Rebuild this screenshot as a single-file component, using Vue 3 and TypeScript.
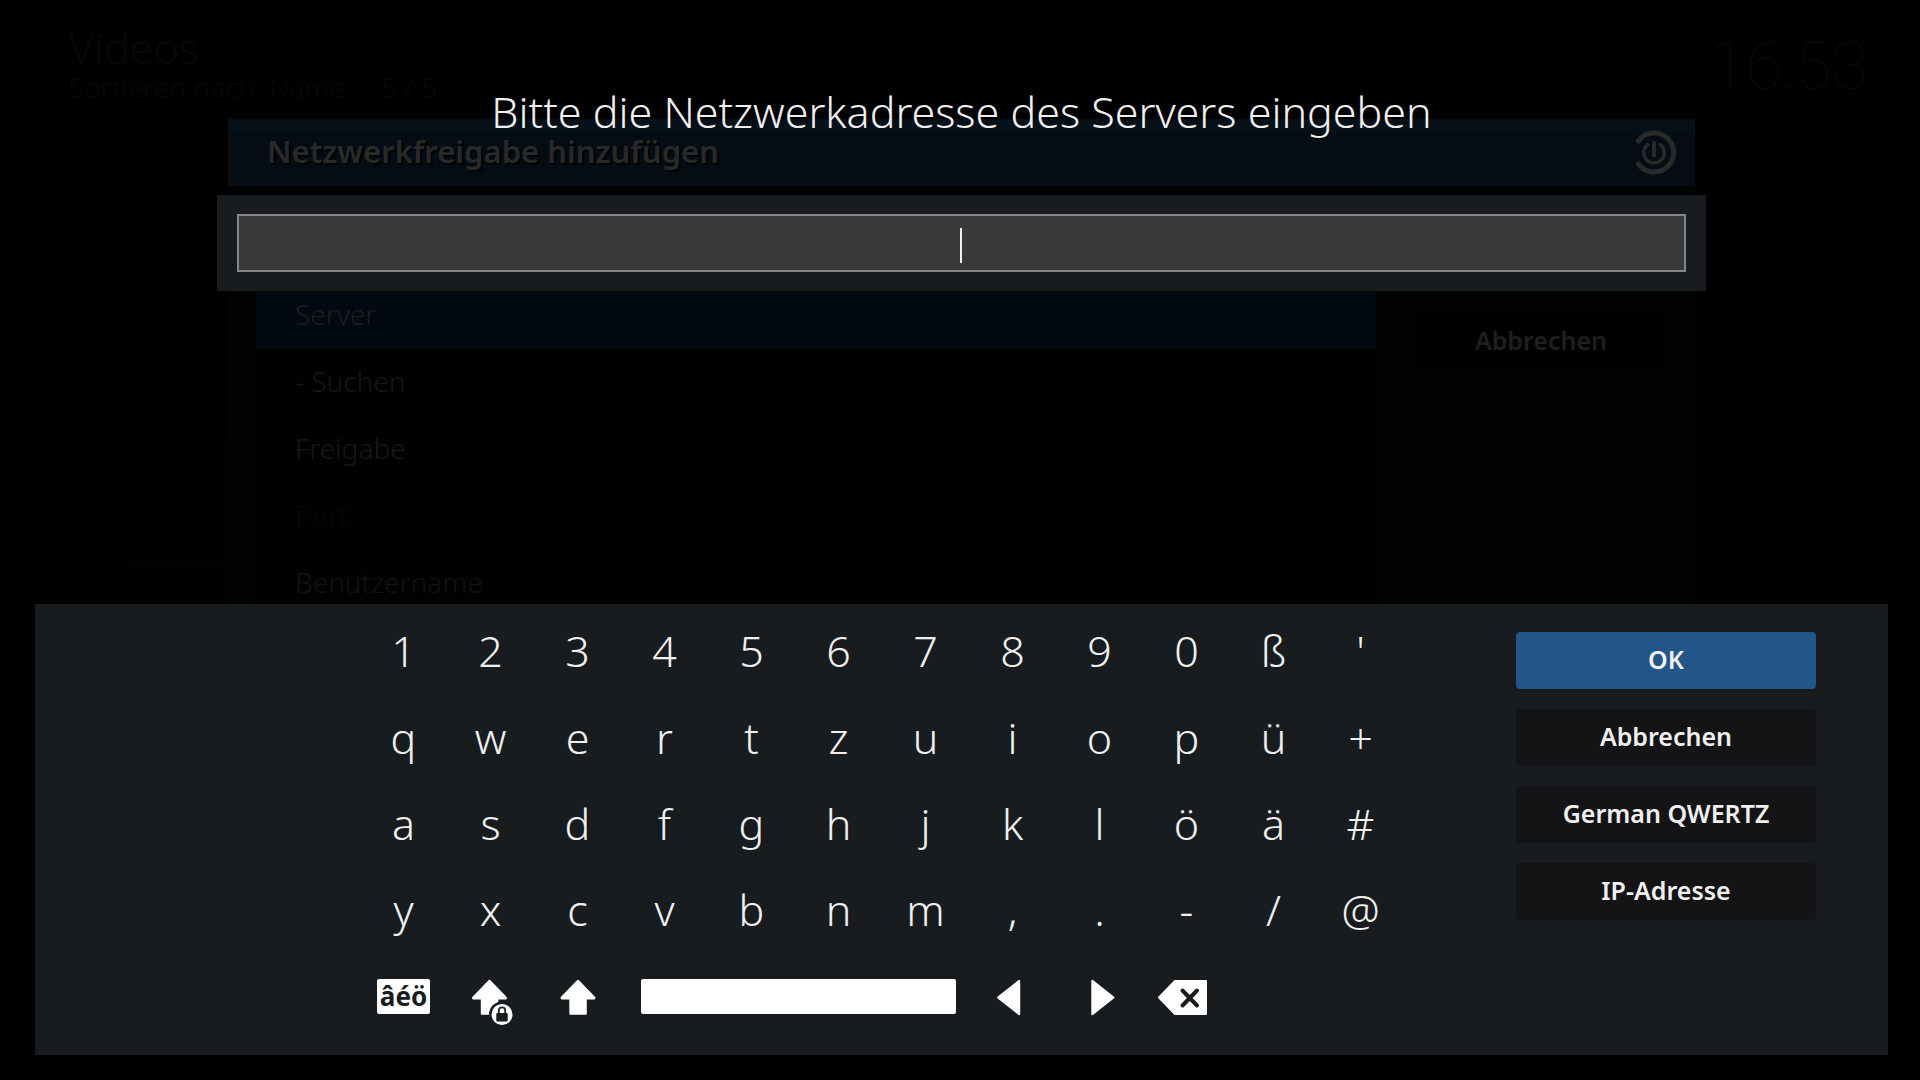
<script setup lang="ts">
import { ref } from 'vue'

interface Row {
  label: string
  tone: string
}

const address = ref('')

const keys: string[] = [
  ...'1234567890ß\'',
  ...'qwertzuiopü+',
  ...'asdfghjklöä#',
  ...'yxcvbnm,.-/@',
]

const rows: Row[] = [
  { label: 'Server', tone: 'selected' },
  { label: '- Suchen', tone: 'normal' },
  { label: 'Freigabe', tone: 'normal' },
  { label: 'Port', tone: 'disabled' },
  { label: 'Benutzername', tone: 'faded' },
]

const actions: string[] = ['OK', 'Abbrechen', 'German QWERTZ', 'IP-Adresse']
</script>

<template>
  <div class="screen">
    <div class="window">
      <header class="topbar">
        <div>
          <div class="section">Videos</div>
          <div class="sorting">Sortieren nach: Name &nbsp;·&nbsp; 5 / 5</div>
        </div>
        <time class="clock">16:53</time>
      </header>
      <div class="tile"></div>
    </div>

    <section class="share">
      <header class="share-head">
        <h2>Netzwerkfreigabe hinzufügen</h2>
        <button class="power" type="button" aria-label="Schließen">
          <svg viewBox="0 0 48 48" width="48" height="48" fill="none" stroke="#292929" stroke-linecap="round">
            <path d="M8.500 12A19.500 19.500 0 1 1 8.500 35" stroke-width="5" />
            <path d="M17.800 15.500A10.300 10.300 0 1 0 30.200 15.500" stroke-width="3.500" />
            <path d="M24 13.500V26.500" stroke-width="4" />
          </svg>
        </button>
      </header>
      <div class="share-body">
        <ul class="rows">
          <li v-for="row in rows" :key="row.label" :class="row.tone">{{ row.label }}</li>
        </ul>
        <div class="share-side">
          <button type="button">Abbrechen</button>
        </div>
      </div>
    </section>

    <main class="dialog">
      <h1><label for="address">Bitte die Netzwerkadresse des Servers eingeben</label></h1>
      <div class="edit">
        <input id="address" v-model="address" type="text" />
        <span class="caret"></span>
      </div>

      <div class="keyboard">
        <div class="keys">
          <button v-for="key in keys" :key="key" type="button">{{ key }}</button>
          <button type="button"><span class="accents">âéö</span></button>
          <button type="button" aria-label="Feststelltaste">
            <svg viewBox="0 0 60 60" width="60" height="60">
              <path class="solid" d="M28.500 13.800L45 30.700L44.600 31.600H36.300V46.800H20.800V31.600H12.400L12 30.700Z" />
              <circle cx="41" cy="47.500" r="13" fill="#181c1e" />
              <circle cx="41" cy="47.500" r="10.500" fill="#fff" />
              <rect x="35.300" y="46" width="11.400" height="8.500" rx="1" fill="#181c1e" />
              <path d="M37.800 46.500V43.500A3.200 3.200 0 0 1 44.200 43.500V46.500" fill="none" stroke="#181c1e" stroke-width="1.800" />
            </svg>
          </button>
          <button type="button" aria-label="Umschalt">
            <svg viewBox="0 0 60 60" width="60" height="60">
              <path class="solid" d="M30 13.800L46.500 30.700L46.100 31.600H37.800V46.800H22.300V31.600H13.900L13.500 30.700Z" />
            </svg>
          </button>
          <button class="space" type="button" aria-label="Leertaste"><span></span></button>
          <button type="button" aria-label="Links">
            <svg viewBox="0 0 60 60" width="60" height="60">
              <path class="solid" d="M15 30.500L36.200 13.800V47.200Z" />
            </svg>
          </button>
          <button type="button" aria-label="Rechts">
            <svg viewBox="0 0 60 60" width="60" height="60">
              <path class="solid" d="M43.500 30.500L22.300 13.800V47.200Z" />
            </svg>
          </button>
          <button type="button" aria-label="Löschen">
            <svg viewBox="0 0 60 60" width="60" height="60">
              <path class="solid" d="M2 30.500L18 14H49V47H18Z" />
              <path d="M25.500 23.500L40 38.500M40 23.500L25.500 38.500" fill="none" stroke="#181c1e" stroke-width="4" stroke-linecap="round" />
            </svg>
          </button>
        </div>
        <div class="actions">
          <button v-for="action in actions" :key="action" type="button" :class="{ primary: action === 'OK' }">
            {{ action }}
          </button>
        </div>
      </div>
    </main>
  </div>
</template>

<style>
body {
  margin: 0;
  background: #000;
}
</style>

<style scoped>
.screen {
  position: relative;
  min-height: 100vh;
  overflow: hidden;
  background: #000;
  color: #f0f0f0;
  font-family: "Noto Sans", "Open Sans", sans-serif;
  font-weight: 300;
}

button {
  margin: 0;
  padding: 0;
  border: 0;
  background: none;
  color: inherit;
  font: inherit;
}

.window {
  position: absolute;
  inset: 0;
  color: #080808;
}

.topbar {
  display: flex;
  justify-content: space-between;
  padding: 20px 52px 0 69px;
}

.section {
  font-size: 43px;
  line-height: 56px;
}

.sorting {
  font-size: 28px;
  line-height: 22px;
}

.clock {
  font-family: Roboto, sans-serif;
  font-size: 67px;
  font-weight: 100;
  line-height: 92px;
}

.tile {
  position: absolute;
  top: 445px;
  left: 124px;
  width: 184px;
  height: 150px;
  background: linear-gradient(#000102 0 80%, #000100 80%);
}

.share {
  position: absolute;
  top: 119px;
  right: 225px;
  bottom: 119px;
  left: 228px;
  display: flex;
  flex-direction: column;
  background: #010202;
}

.share-head {
  display: flex;
  align-items: center;
  justify-content: space-between;
  height: 67px;
  padding: 0 17px 0 39px;
  background: linear-gradient(#061018 0 14px, #050c13 14px);
}

.share-head h2 {
  margin: 0;
  padding-bottom: 4px;
  color: #292929;
  font-size: 31px;
  font-weight: 600;
  line-height: 44px;
  text-shadow: 2px 2px 0 #010203;
}

.power {
  display: flex;
}

.share-body {
  display: flex;
  flex: 1;
}

.rows {
  flex: 1;
  margin: 0 0 0 28px;
  padding: 96px 0 0;
  background: #010101;
  list-style: none;
  font-size: 28px;
}

.rows li {
  box-sizing: border-box;
  height: 67px;
  padding: 0 39px 2px;
  color: #181818;
  line-height: 65px;
}

.rows .selected {
  background: #030911;
  color: #1e1e1e;
}

.rows .disabled {
  color: #080808;
}

.rows .faded {
  color: #131313;
}

.share-side {
  box-sizing: border-box;
  width: 319px;
  padding: 127px 29px 0 40px;
}

.share-side button {
  width: 250px;
  height: 57px;
  padding-bottom: 4px;
  background: #010101;
  color: #1f1f1f;
  font-size: 25px;
  font-weight: 600;
}

.dialog {
  position: relative;
  box-sizing: border-box;
  display: flex;
  flex-direction: column;
  min-height: 100vh;
  padding: 82px 32px 25px 35px;
}

h1 {
  margin: 0 0 53px;
  font-size: 43px;
  font-weight: 300;
  line-height: 60px;
  text-align: center;
}

.edit {
  position: relative;
  display: flex;
  margin: 0 182px;
  padding: 19px 20px;
  background: #181c1e;
}

.edit input {
  box-sizing: border-box;
  flex: 1;
  min-width: 0;
  height: 58px;
  padding: 0 16px;
  border: 2px solid #858787;
  outline: 0;
  background: #39393c;
  color: inherit;
  font: inherit;
  font-size: 28px;
  text-align: center;
}

.caret {
  position: absolute;
  top: 33px;
  left: 50%;
  width: 2px;
  height: 35px;
  margin-left: -2px;
  background: #f0f0f0;
}

.keyboard {
  display: flex;
  gap: 112px;
  margin-top: auto;
  padding: 4px 72px 15px 325px;
  background: #181c1e;
}

.keys {
  flex: 1;
  display: grid;
  grid-template-columns: repeat(12, 1fr);
  grid-template-rows: repeat(5, 1fr);
  height: 432px;
  font-size: 43px;
}

.keys button {
  display: flex;
  align-items: center;
  justify-content: center;
  min-width: 0;
  line-height: 58px;
}

.accents {
  width: 53px;
  height: 35px;
  border-radius: 2px;
  background: #fff;
  color: #181c1e;
  font-size: 26px;
  font-weight: 700;
  line-height: 35px;
}

.solid {
  fill: #fff;
  stroke: #fff;
  stroke-width: 2;
  stroke-linejoin: round;
}

.keys .space {
  grid-column: span 4;
  padding: 0 13px 0 20px;
}

.space span {
  flex: 1;
  height: 35px;
  border-radius: 2px;
  background: #fff;
}

.actions {
  display: flex;
  flex-direction: column;
  gap: 20px;
  width: 300px;
  padding-top: 24px;
}

.actions button {
  height: 57px;
  padding-bottom: 4px;
  border-radius: 4px;
  background: #141416;
  font-size: 25px;
  font-weight: 600;
}

.actions .primary {
  background: #225588;
}
</style>
